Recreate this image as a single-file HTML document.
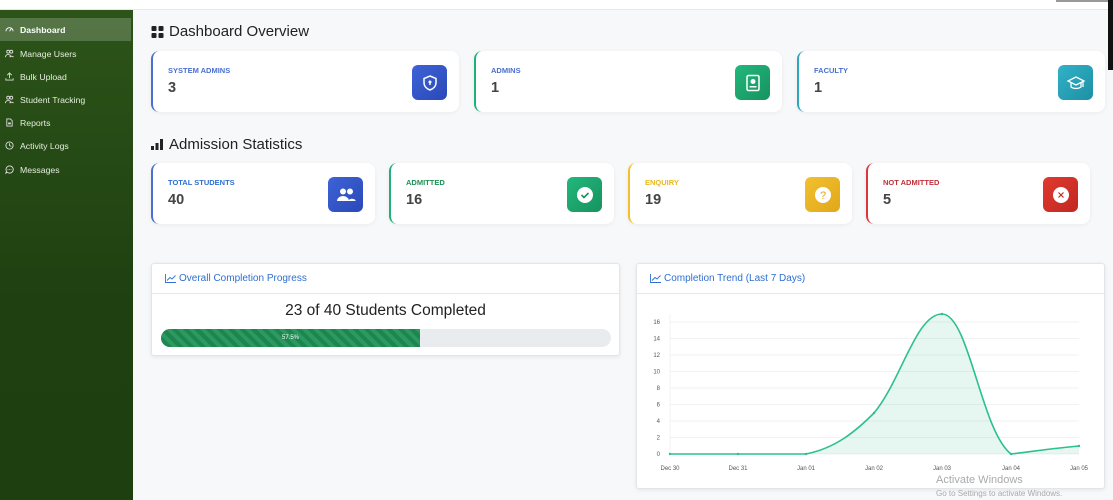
<!DOCTYPE html>
<html><head><meta charset="utf-8"><style>
*{margin:0;padding:0;box-sizing:border-box}
body{width:1113px;height:500px;overflow:hidden;background:#f7f8fa;font-family:"Liberation Sans",sans-serif;position:relative}
.top{position:absolute;left:0;top:0;width:1113px;height:10px;background:#fff;border-bottom:1px solid #e8e8ea}
.side{position:absolute;left:0;top:10px;width:133px;height:490px;background:linear-gradient(#2c5419,#1f4011 60%,#1e3f10)}
.item{position:absolute;left:0;width:131px;height:23px;color:#e6eee0;font-size:8.7px;display:flex;align-items:center;padding-left:5px}
.item svg{width:9px;height:9px;margin-right:6px}
.item.act{background:rgba(255,255,255,.2);font-weight:bold;color:#fff}
h2{position:absolute;font-size:15px;font-weight:normal;color:#222;display:flex;align-items:center}
.card{position:absolute;background:#fff;border-radius:8px;box-shadow:0 1px 4px rgba(0,0,0,.06);border-left:2px solid}
.card .l{position:absolute;left:15px;top:15px;font-size:7.5px;font-weight:bold}
.card .v{position:absolute;left:15px;top:29px;font-size:14.5px;font-weight:bold;color:#444}
.ic{position:absolute;right:12px;top:14px;width:35px;height:35px;border-radius:6px;display:flex;align-items:center;justify-content:center}
.panel{position:absolute;background:#fff;border:1px solid #e3e5e8;border-radius:3px;box-shadow:0 1px 4px rgba(0,0,0,.08)}
.ph{height:30px;border-bottom:1px solid #e5e7ea;font-size:10px;color:#2f6fd0;display:flex;align-items:center;padding-left:13px}
.ph svg{margin-right:3px}
</style></head><body>
<div class="top"></div>
<div style="position:absolute;left:1056px;top:0;width:57px;height:2px;background:#999"></div>
<div style="position:absolute;left:1108px;top:0;width:5px;height:70px;background:#111"></div>
<div class="side">
<div class="item act" style="top:8px"><svg viewBox="0 0 10 10"><path d="M1 7a4 4 0 0 1 8 0M5 7l2-3" stroke="#fff" fill="none"/></svg>Dashboard</div>
<div class="item" style="top:32px"><svg viewBox="0 0 10 10"><circle cx="3.5" cy="3" r="1.6" stroke="#ddd" fill="none"/><circle cx="7" cy="3" r="1.6" stroke="#ddd" fill="none"/><path d="M.5 9a3 3 0 0 1 6 0M5 9a3 3 0 0 1 4.5 0" stroke="#ddd" fill="none"/></svg>Manage Users</div>
<div class="item" style="top:55px"><svg viewBox="0 0 10 10"><path d="M5 1v6M2.5 3.5L5 1l2.5 2.5M1 7v2h8V7" stroke="#ddd" fill="none"/></svg>Bulk Upload</div>
<div class="item" style="top:78px"><svg viewBox="0 0 10 10"><circle cx="3.5" cy="3" r="1.6" stroke="#ddd" fill="none"/><circle cx="7" cy="3" r="1.6" stroke="#ddd" fill="none"/><path d="M.5 9a3 3 0 0 1 6 0M5 9a3 3 0 0 1 4.5 0" stroke="#ddd" fill="none"/></svg>Student Tracking</div>
<div class="item" style="top:101px"><svg viewBox="0 0 10 10"><path d="M2 1h4l2 2v6H2z" stroke="#ddd" fill="none"/><rect x="3.5" y="5" width="3" height="2" fill="#ddd"/></svg>Reports</div>
<div class="item" style="top:124px"><svg viewBox="0 0 10 10"><circle cx="5" cy="5" r="4" stroke="#ddd" fill="none"/><path d="M5 2.5V5l2 1" stroke="#ddd" fill="none"/></svg>Activity Logs</div>
<div class="item" style="top:148px"><svg viewBox="0 0 10 10"><path d="M5 1a4 4 0 1 1-2.5 7L1 9l.7-2A4 4 0 0 1 5 1z" stroke="#ddd" fill="none"/><circle cx="3.3" cy="5" r=".5" fill="#ddd"/><circle cx="5" cy="5" r=".5" fill="#ddd"/><circle cx="6.7" cy="5" r=".5" fill="#ddd"/></svg>Messages</div>
</div>

<h2 style="left:151px;top:23px"><svg width="13" height="12" viewBox="0 0 12 12" style="margin-right:5px"><rect x="0" y="0" width="5" height="5" rx="1" fill="#222"/><rect x="7" y="0" width="5" height="5" rx="1" fill="#222"/><rect x="0" y="7" width="5" height="5" rx="1" fill="#222"/><rect x="7" y="7" width="5" height="5" rx="1" fill="#222"/></svg>Dashboard Overview</h2>

<div class="card" style="left:151px;top:51px;width:308px;height:61px;border-color:#4a6fd0"><div class="l" style="color:#4a6fd0">SYSTEM ADMINS</div><div class="v">3</div>
<div class="ic" style="background:linear-gradient(135deg,#3d63d6,#2b48b8)"><svg width="18" height="18" viewBox="0 0 18 18"><path d="M9 2l6 2.5v4c0 4-3 6.5-6 7.5-3-1-6-3.5-6-7.5v-4z" stroke="#fff" stroke-width="1.5" fill="none"/><circle cx="9" cy="8" r="1.5" fill="#fff"/><rect x="8.3" y="8" width="1.4" height="3" fill="#fff"/></svg></div></div>
<div class="card" style="left:474px;top:51px;width:308px;height:61px;border-color:#20b07a"><div class="l" style="color:#4a6fd0">ADMINS</div><div class="v">1</div>
<div class="ic" style="background:linear-gradient(135deg,#22b87c,#17925f)"><svg width="16" height="18" viewBox="0 0 16 18"><rect x="2" y="1.5" width="12" height="15" rx="1.5" stroke="#fff" stroke-width="1.5" fill="none"/><circle cx="8" cy="7.5" r="2.5" fill="#fff"/><rect x="4.5" y="12" width="7" height="1.5" fill="#fff"/></svg></div></div>
<div class="card" style="left:797px;top:51px;width:308px;height:61px;border-color:#2aa8c0"><div class="l" style="color:#4a6fd0">FACULTY</div><div class="v">1</div>
<div class="ic" style="background:linear-gradient(135deg,#30b2c8,#1f8fa3)"><svg width="20" height="18" viewBox="0 0 20 18"><path d="M10 3l8 4-8 4-8-4z" stroke="#fff" stroke-width="1.3" fill="none"/><path d="M5 9v4c3 2 7 2 10 0V9" stroke="#fff" stroke-width="1.3" fill="none"/><path d="M17 7v6" stroke="#fff" stroke-width="1.3"/></svg></div></div>

<h2 style="left:151px;top:136px"><svg width="13" height="11" viewBox="0 0 13 11" style="margin-right:5px"><rect x="0" y="7" width="3" height="4" fill="#222"/><rect x="4.5" y="4" width="3" height="7" fill="#222"/><rect x="9" y="0" width="3" height="11" fill="#222"/></svg>Admission Statistics</h2>

<div class="card" style="left:151px;top:163px;width:224px;height:61px;border-color:#4a6fd0"><div class="l" style="color:#2f6fd0">TOTAL STUDENTS</div><div class="v">40</div>
<div class="ic" style="background:linear-gradient(135deg,#3d63d6,#2b48b8)"><svg width="20" height="16" viewBox="0 0 20 16"><circle cx="7" cy="4.5" r="3" fill="#fff"/><circle cx="14" cy="4.5" r="3" fill="#fff"/><path d="M1 14a6 5 0 0 1 12 0zM12 14a5 5 0 0 1 7.5-1v1z" fill="#fff"/></svg></div></div>
<div class="card" style="left:389px;top:163px;width:225px;height:61px;border-color:#20b07a"><div class="l" style="color:#1f8f55">ADMITTED</div><div class="v">16</div>
<div class="ic" style="background:linear-gradient(135deg,#22b87c,#17925f)"><svg width="18" height="18" viewBox="0 0 18 18"><circle cx="9" cy="9" r="8" fill="#fff"/><path d="M5.5 9l2.5 2.5 4.5-4.5" stroke="#17925f" stroke-width="1.6" fill="none"/></svg></div></div>
<div class="card" style="left:628px;top:163px;width:224px;height:61px;border-color:#f0c030"><div class="l" style="color:#e8b820">ENQUIRY</div><div class="v">19</div>
<div class="ic" style="background:linear-gradient(135deg,#f2c030,#e0a81a)"><svg width="18" height="18" viewBox="0 0 18 18"><circle cx="9" cy="9" r="8" fill="#fff"/><text x="9" y="13" text-anchor="middle" font-size="11" font-family="Liberation Sans" fill="#e0a81a">?</text></svg></div></div>
<div class="card" style="left:866px;top:163px;width:224px;height:61px;border-color:#d9363e"><div class="l" style="color:#c0303a">NOT ADMITTED</div><div class="v">5</div>
<div class="ic" style="background:linear-gradient(135deg,#e03a30,#c02820)"><svg width="18" height="18" viewBox="0 0 18 18"><circle cx="9" cy="9" r="8" fill="#fff"/><path d="M6.5 6.5l5 5M11.5 6.5l-5 5" stroke="#c02820" stroke-width="1.2"/></svg></div></div>

<div class="panel" style="left:151px;top:263px;width:469px;height:93px">
<div class="ph"><svg width="11" height="9" viewBox="0 0 11 9"><path d="M.5 0v8.5H11M2 6.5l3-3 2 1.5 3.5-3.5" stroke="#2f6fd0" fill="none" stroke-width=".9"/></svg>Overall Completion Progress</div>
<div style="text-align:center;font-size:15.5px;color:#222;margin-top:8px">23 of 40 Students Completed</div>
<div style="position:absolute;left:9px;top:65px;width:450px;height:18px;border-radius:9px;background:#e9ecef;overflow:hidden">
<div style="width:259px;height:18px;background:repeating-linear-gradient(45deg,#2a9a5e 0 4px,#1f8550 4px 8px);color:#fff;font-size:6px;display:flex;align-items:center;justify-content:center">57.5%</div></div>
</div>

<div class="panel" style="left:636px;top:263px;width:469px;height:226px">
<div class="ph"><svg width="11" height="9" viewBox="0 0 11 9"><path d="M.5 0v8.5H11M2 6.5l3-3 2 1.5 3.5-3.5" stroke="#2f6fd0" fill="none" stroke-width=".9"/></svg>Completion Trend (Last 7 Days)</div>
<svg style="position:absolute;left:0;top:0" width="469" height="226" viewBox="636 263 469 226" font-family="Liberation Sans" font-size="6" fill="#555">
<g stroke="#eee" stroke-width=".7">
<line x1="669" y1="321" x2="1078" y2="321"/><line x1="669" y1="337.5" x2="1078" y2="337.5"/><line x1="669" y1="354" x2="1078" y2="354"/><line x1="669" y1="370.5" x2="1078" y2="370.5"/><line x1="669" y1="387" x2="1078" y2="387"/><line x1="669" y1="403.5" x2="1078" y2="403.5"/><line x1="669" y1="420" x2="1078" y2="420"/><line x1="669" y1="436.5" x2="1078" y2="436.5"/><line x1="669" y1="453" x2="1078" y2="453"/><line x1="669" y1="313" x2="669" y2="453"/></g>
<g text-anchor="end"><text x="659" y="323">16</text><text x="659" y="339.5">14</text><text x="659" y="356">12</text><text x="659" y="372.5">10</text><text x="659" y="389">8</text><text x="659" y="405.5">6</text><text x="659" y="422">4</text><text x="659" y="438.5">2</text><text x="659" y="455">0</text></g>
<g text-anchor="middle"><text x="669" y="469">Dec 30</text><text x="737" y="469">Dec 31</text><text x="805" y="469">Jan 01</text><text x="873" y="469">Jan 02</text><text x="941" y="469">Jan 03</text><text x="1010" y="469">Jan 04</text><text x="1078" y="469">Jan 05</text></g>
<path d="M669 453L805 453C835 447 855 430 873 412C900 380 915 313 941 313C968 313 980 430 1010 453C1035 450 1055 447 1078 445L1078 453Z" fill="rgba(40,190,130,.12)"/>
<path d="M669 453L805 453C835 447 855 430 873 412C900 380 915 313 941 313C968 313 980 430 1010 453C1035 450 1055 447 1078 445" stroke="#2cc08a" stroke-width="1.6" fill="none"/>
<g fill="#2cc08a"><circle cx="669" cy="453" r="1.2"/><circle cx="737" cy="453" r="1.2"/><circle cx="805" cy="453" r="1.2"/><circle cx="873" cy="412" r="1.2"/><circle cx="941" cy="313" r="1.2"/><circle cx="1010" cy="453" r="1.2"/><circle cx="1078" cy="445" r="1.2"/></g>
</svg>
</div>
<div style="position:absolute;left:936px;top:474px;font-size:11px;color:#aaa">Activate Windows</div>
<div style="position:absolute;left:936px;top:489px;font-size:8px;color:#aaa">Go to Settings to activate Windows.</div>
</body></html>
